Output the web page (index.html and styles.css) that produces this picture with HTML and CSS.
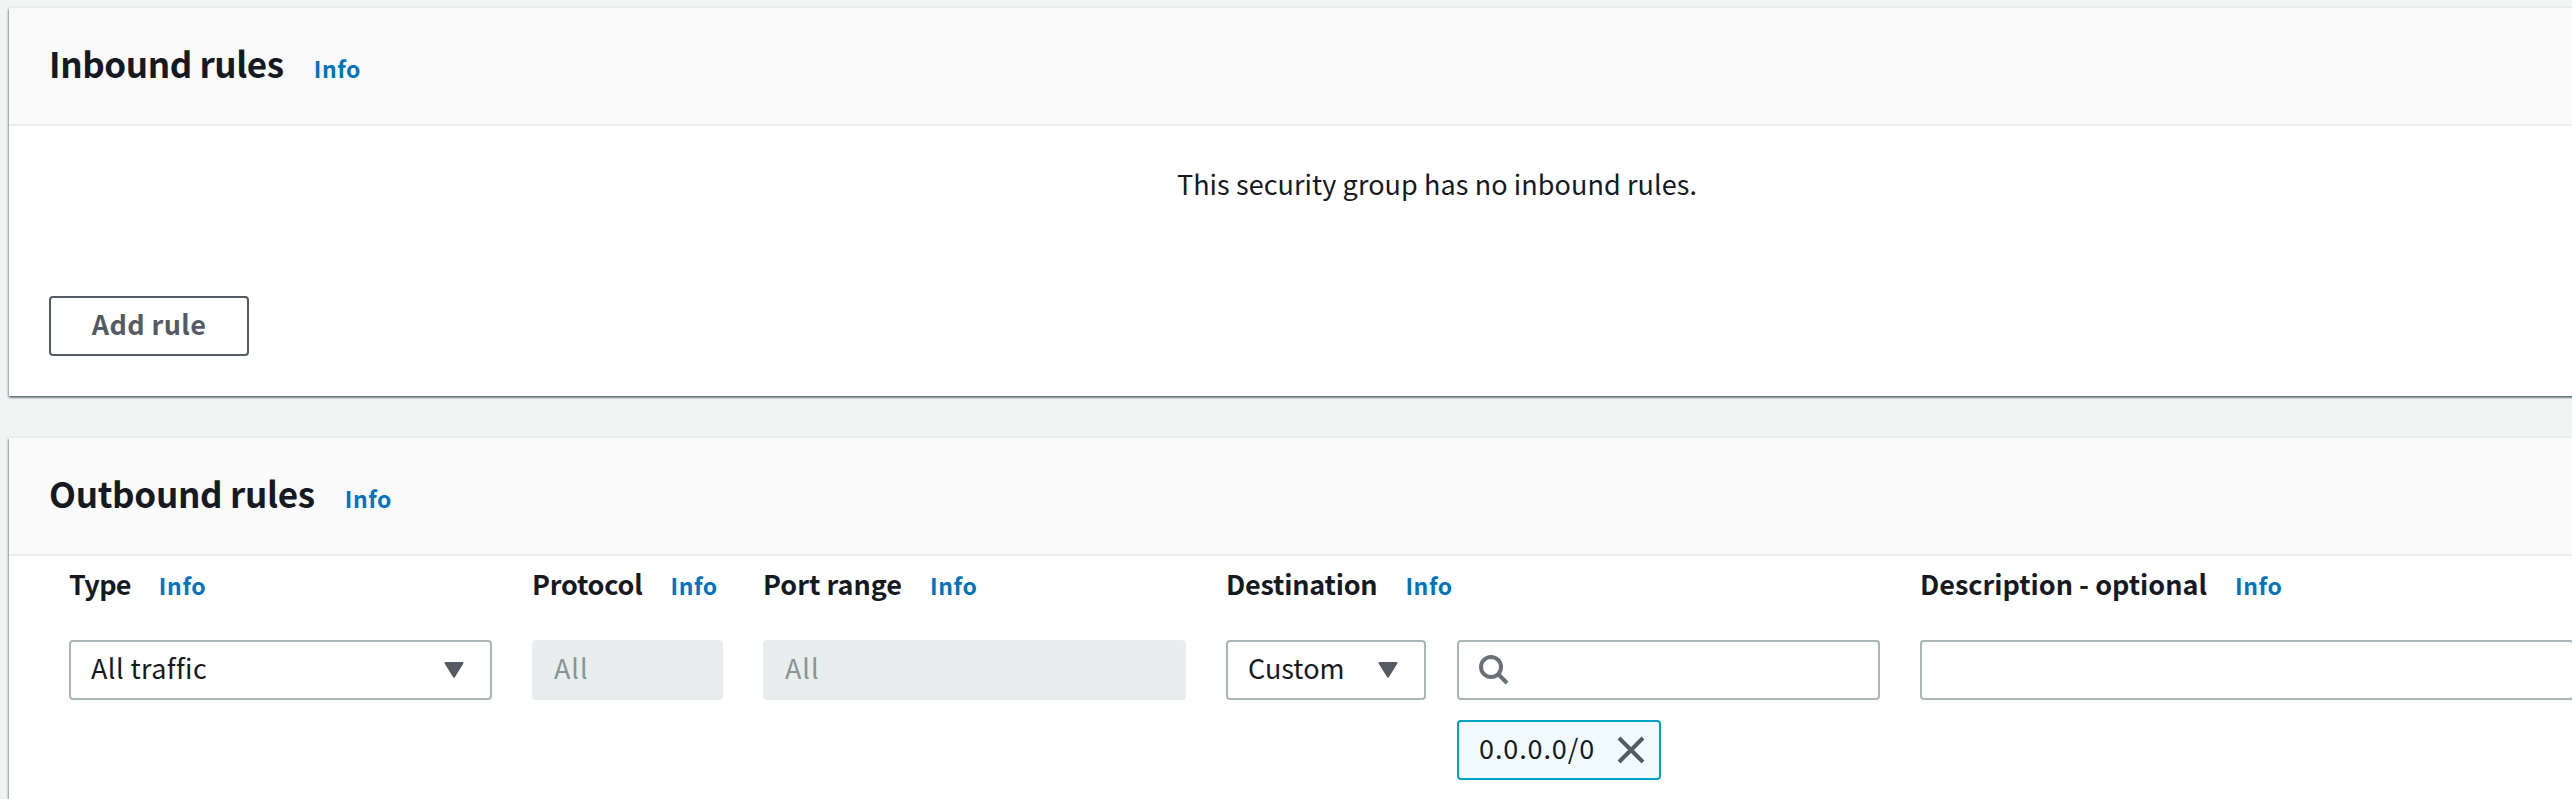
FILE: index.html
```
<!DOCTYPE html>
<html lang="en">
<head>
<meta charset="utf-8">
<title>Security group rules</title>
<link rel="stylesheet" href="styles.css">
</head>
<body>
<main class="page">
  <section class="panel">
    <header class="panel-header">
      <h2 class="panel-title">Inbound rules</h2>
      <a class="info">Info</a>
    </header>
    <div class="panel-body">
      <p class="empty">This security group has no inbound rules.</p>
      <button class="button" type="button">Add rule</button>
    </div>
  </section>

  <section class="panel">
    <header class="panel-header">
      <h2 class="panel-title outbound">Outbound rules</h2>
      <a class="info">Info</a>
    </header>
    <div class="rules">
      <div class="field type">
        <div class="label"><span class="label-text tight">Type</span><a class="info">Info</a></div>
        <div class="control select"><span class="value traffic">All traffic</span>
          <svg class="caret" viewBox="0 0 20 16"><path d="M1.5 1h17L10 14.6z"/></svg>
        </div>
      </div>
      <div class="field protocol">
        <div class="label"><span class="label-text snug">Protocol</span><a class="info">Info</a></div>
        <div class="control disabled"><span class="value all">All</span></div>
      </div>
      <div class="field port">
        <div class="label"><span class="label-text">Port range</span><a class="info">Info</a></div>
        <div class="control disabled"><span class="value all">All</span></div>
      </div>
      <div class="field destination">
        <div class="label"><span class="label-text snug">Destination</span><a class="info">Info</a></div>
        <div class="destination-row">
          <div class="control select"><span class="value">Custom</span>
            <svg class="caret" viewBox="0 0 20 16"><path d="M1.5 1h17L10 14.6z"/></svg>
          </div>
          <div class="search-column">
            <div class="control search">
              <svg class="search-icon" viewBox="0 0 30 30"><circle cx="12" cy="12" r="10"/><path d="M19 19l9 9"/></svg>
            </div>
            <div class="token"><span class="value cidr">0.0.0.0/0</span>
              <svg class="close" viewBox="0 0 28 28"><path d="M2 2l24 24M26 2L2 26"/></svg>
            </div>
          </div>
        </div>
      </div>
      <div class="field description">
        <div class="label"><span class="label-text">Description - optional</span><a class="info">Info</a></div>
        <div class="control"></div>
      </div>
    </div>
  </section>
</main>
</body>
</html>
```
FILE: styles.css
```
* { box-sizing: border-box; }

body {
  margin: 0;
  height: 799px;
  overflow: hidden;
  background: #f2f3f3;
  color: #16191f;
  font-family: "Noto Sans CJK SC", "Noto Sans", sans-serif;
  font-size: 27px;
}

.page {
  display: flex;
  flex-direction: column;
  gap: 42px;
  width: 2860px;
  padding: 8px 0 0 9px;
}

.panel {
  flex: none;
  height: 388px;
  background: #fff;
  box-shadow: 0 -2px 0 0 #eaeded, 0 2px 2px 0 rgba(0, 28, 36, .35), 1px 1px 2px 0 rgba(0, 28, 36, .3), -1px 1px 2px 0 rgba(0, 28, 36, .3);
}

.panel-header {
  display: flex;
  align-items: baseline;
  gap: 30px;
  height: 118px;
  padding: 29px 0 0 40px;
  background: #fafafa;
  border-bottom: 2px solid #eaeded;
}

.panel-title {
  margin: 0;
  font-size: 35px;
  line-height: 52px;
  font-weight: 700;
  letter-spacing: -.4px;
}

.outbound { letter-spacing: -.3px; }

.info {
  color: #0073bb;
  font-size: 23px;
  line-height: 30px;
  font-weight: 700;
  letter-spacing: .6px;
}

.panel-body {
  display: flex;
  flex-direction: column;
  align-items: flex-start;
  padding-left: 40px;
}

.empty {
  width: 2776px;
  margin: 38px 0 92px;
  line-height: 40px;
  text-align: center;
  letter-spacing: .08px;
}

.button {
  width: 200px;
  height: 60px;
  padding: 0 0 5px;
  border: 2px solid #545b64;
  border-radius: 4px;
  background: #fff;
  color: #545b64;
  font: inherit;
  font-weight: 700;
  letter-spacing: .4px;
}

.rules {
  display: flex;
  gap: 40px;
  padding: 8px 0 0 60px;
}

.field { flex: none; }
.type, .port { width: 423px; }
.protocol { width: 191px; }
.destination { width: 654px; }
.description { width: 654px; }

.label {
  display: flex;
  align-items: baseline;
  gap: 28px;
  height: 76px;
  white-space: nowrap;
}

.label-text {
  line-height: 40px;
  font-weight: 700;
}

.tight { letter-spacing: -.7px; }
.snug { letter-spacing: -.22px; }

.control {
  display: flex;
  align-items: center;
  justify-content: space-between;
  height: 60px;
  padding: 0 26px 0 20px;
  border: 2px solid #aab7b8;
  border-radius: 4px;
  background: #fff;
}

.disabled {
  border-color: #eaeded;
  background: #eaeded;
  color: #879596;
}

.value {
  padding-bottom: 4px;
  line-height: 40px;
  white-space: nowrap;
}

.all { letter-spacing: .9px; }
.traffic { letter-spacing: .4px; }
.cidr { letter-spacing: .9px; }

.caret {
  width: 20px;
  height: 16px;
  fill: #545b64;
  stroke: #545b64;
  stroke-width: 2px;
  stroke-linejoin: round;
}

.destination-row {
  display: grid;
  grid-template-columns: 200px 423px;
  gap: 31px;
  align-items: start;
}

.search-column {
  display: grid;
  gap: 20px;
}

.search-icon {
  width: 30px;
  height: 30px;
  fill: none;
  stroke: #687078;
  stroke-width: 4px;
}

.token {
  display: flex;
  align-items: center;
  justify-content: space-between;
  width: 204px;
  height: 60px;
  padding: 0 14px 0 20px;
  border: 2px solid #00a1c9;
  border-radius: 4px;
  background: #f1faff;
}

.close {
  width: 28px;
  height: 28px;
  fill: none;
  stroke: #545b64;
  stroke-width: 4px;
}
```
